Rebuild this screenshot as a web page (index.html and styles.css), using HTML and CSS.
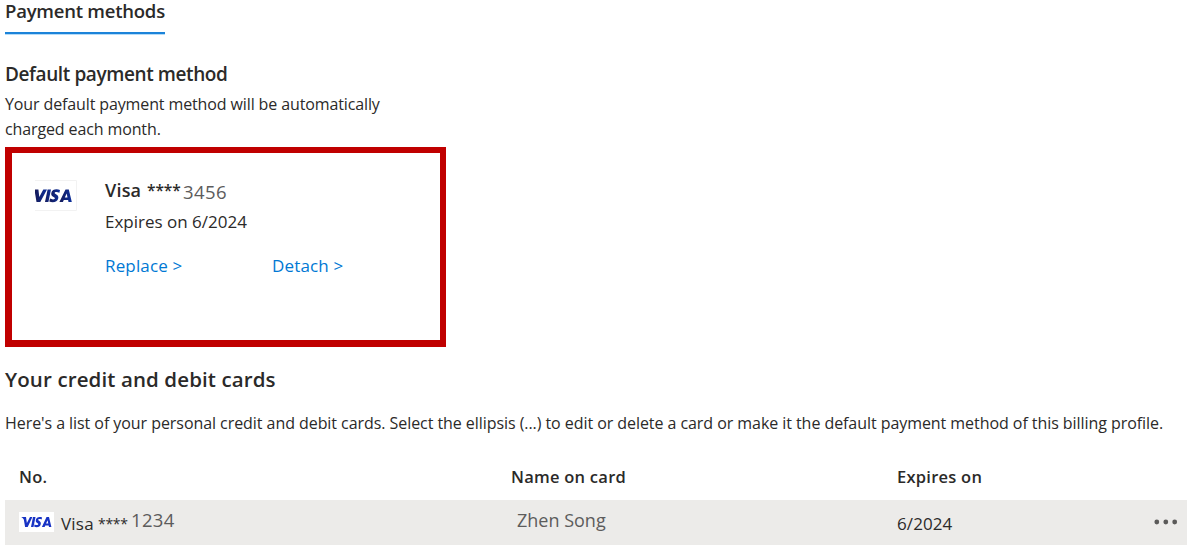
FILE: index.html
```html
<!DOCTYPE html>
<html lang="en">
<head>
<meta charset="utf-8">
<title>Payment methods</title>
<link rel="stylesheet" href="styles.css">
</head>
<body>
<main class="page">
  <nav class="tabs"><span class="tab"><span class="tab-label">Payment methods</span></span></nav>
  <section>
    <h2 class="default-title">Default payment method</h2>
    <p class="default-text">Your default payment method will be automatically<br>charged each month.</p>
    <div class="default-card">
      <svg class="visa-large" viewBox="0 0 42 31">
        <defs><linearGradient id="navy"><stop offset="0" stop-color="#151a58"/><stop offset="1" stop-color="#0c2f9c"/></linearGradient></defs>
        <path d="M0 .5H41.5V30.5H0" fill="#fff" stroke="#f2f2f2"/>
        <g fill="url(#navy)">
          <path d="M0 9.5H3.4L4.3 17L8.3 9.5H12L5.3 22H1.5L0 13Z"/>
          <path d="M12.6 9.5H16L13.4 22H10Z"/>
          <path d="M25 10L24.4 12.7C22 11.7 19.7 11.8 19.7 12.9C19.7 14.2 24 14.5 23.3 18.2C22.6 22 18 23 14.3 21.5L15 18.6C17.3 19.8 19.8 19.7 19.9 18.3C20 16.9 15.5 16.7 16.3 13C17 9.3 21.5 8.7 25 10Z"/>
          <path fill-rule="evenodd" d="M30.5 9.5H33.8L36.8 22H33.5L33.1 20H28.8L27.9 22H24.4ZM31.7 13.5L29.8 17.5H32.5Z"/>
        </g>
      </svg>
      <div class="card-info">
        <div class="card-name"><span class="brand">Visa</span><span class="mask">****</span><span class="digits">3456</span></div>
        <div class="card-expiry">Expires on 6/2024</div>
        <div class="card-actions"><a class="replace">Replace &gt;</a><a class="detach">Detach &gt;</a></div>
      </div>
    </div>
  </section>
  <section>
    <h2 class="cards-title">Your credit and debit cards</h2>
    <p class="cards-text">Here's a list of your personal credit and debit cards. Select the ellipsis (...) to edit or delete a card or make it the default payment method of this billing profile.</p>
    <div class="row head"><span class="th-no">No.</span><span class="th-name">Name on card</span><span class="th-exp">Expires on</span></div>
    <div class="row item">
      <div class="number">
        <svg class="visa-small" viewBox="0 0 35 20">
          <path d="M0 0H35V20H0Z" fill="#fff"/>
          <g fill="#1833c4">
            <path d="M2.2 5H7L7.9 11L11 5H13.4L8.7 15H6.1L4.8 7.4Q3.8 6 2.2 5Z"/>
            <path d="M14 5H16.5L14.5 15H12Z"/>
            <path d="M23.1 5.4L22.6 7.5C20.7 6.7 19.2 6.9 19.2 7.7C19.2 8.8 22.3 9 21.8 11.9C21.3 15 17.9 15.9 15.1 14.6L15.6 12.4C17.5 13.4 19.2 13.2 19.3 12.1C19.4 10.9 16.2 10.8 16.8 7.9C17.3 5 20.4 4.3 23.1 5.4Z"/>
            <path fill-rule="evenodd" d="M27.5 5H30L32.4 15H30L29.7 13.4H26.3L25.6 15H22.9ZM28.5 8.2L27.1 11.4H29.3Z"/>
          </g>
        </svg>
        <span class="small-brand">Visa</span><span class="small-mask">****</span><span class="small-digits">1234</span>
      </div>
      <span class="holder">Zhen Song</span>
      <span class="expiry">6/2024</span>
      <svg class="more" viewBox="0 0 24 6"><circle cx="2.8" cy="3" r="2.4"/><circle cx="11.8" cy="3" r="2.4"/><circle cx="20.7" cy="3" r="2.4"/></svg>
    </div>
  </section>
</main>
</body>
</html>
```
FILE: styles.css
```css
* { box-sizing: border-box; }
body { margin: 0; background: #fff; color: #2b2a29; font-family: "Open Sans", "Noto Sans", sans-serif; font-size: 16px; overflow: hidden; }
h2, p { margin: 0; white-space: nowrap; }
svg { display: block; flex: none; }
span, a { white-space: nowrap; }
.page { padding-left: 5px; height: 550px; }
.tabs { display: flex; height: 60px; }
.tab { width: 160px; height: 34px; border-bottom: 2px solid #1b83d9; box-shadow: 0 1px 0 #b5dcf8; }
.tab-label { display: block; font-size: 18.5px; line-height: 22px; font-weight: 600; letter-spacing: -0.23px; }
.default-title { font-size: 19px; line-height: 26px; font-weight: 600; letter-spacing: -0.4px; padding: 1px 0 5px; }
.default-text { font-size: 16px; line-height: 25px; padding-bottom: 5px; letter-spacing: -0.12px; }
.default-card { display: flex; width: 441px; height: 200px; border: 6px solid #c00000; border-left-width: 7px; border-bottom-width: 7px; padding: 22px 0 0 23px; }
.visa-large { width: 42px; height: 31px; margin-top: 5px; }
.card-info { padding-left: 28px; }
.card-name { display: flex; height: 32px; line-height: 30px; font-size: 18px; }
.brand { width: 42px; font-weight: 600; letter-spacing: 0.2px; }
.mask { width: 36px; font-size: 15.5px; font-weight: 600; letter-spacing: -0.1px; }
.digits { font-size: 18.5px; font-weight: 400; color: #5c5c5c; line-height: 33px; letter-spacing: 0.45px; }
.card-expiry { height: 44px; line-height: 30px; font-size: 17px; }
.card-actions { display: flex; line-height: 30px; font-size: 17px; color: #0078d4; letter-spacing: 0.15px; }
.replace { width: 167px; }
.cards-title { padding: 18px 0 1px; font-size: 20.5px; line-height: 28px; font-weight: 600; letter-spacing: 0.11px; }
.cards-text { padding-top: 17px; height: 63px; font-size: 16px; line-height: 25px; letter-spacing: -0.06px; }
.row { display: grid; grid-template-columns: 492px 386px 257px 1fr; padding-left: 14px; }
.head { height: 43px; line-height: 40px; font-size: 16.5px; font-weight: 600; letter-spacing: 0.25px; }
.item { height: 45px; background: #ecebe9; }
.number { display: flex; font-size: 17px; line-height: 45px; }
.visa-small { width: 35px; height: 20px; margin-top: 12px; }
.small-brand { width: 37px; margin-left: 7px; padding-top: 1px; letter-spacing: 0.2px; }
.small-mask { width: 33px; font-size: 14px; padding-top: 1px; letter-spacing: -0.3px; }
.small-digits { font-size: 18.5px; font-weight: 400; color: #5c5c5c; line-height: 40px; letter-spacing: 0.3px; }
.holder { padding-left: 6px; font-size: 18px; font-weight: 400; color: #5c5c5c; line-height: 40px; }
.expiry { font-size: 17px; line-height: 47px; letter-spacing: 0.1px; }
.more { width: 24px; height: 6px; margin-top: 19px; fill: #5b5a59; }
```
